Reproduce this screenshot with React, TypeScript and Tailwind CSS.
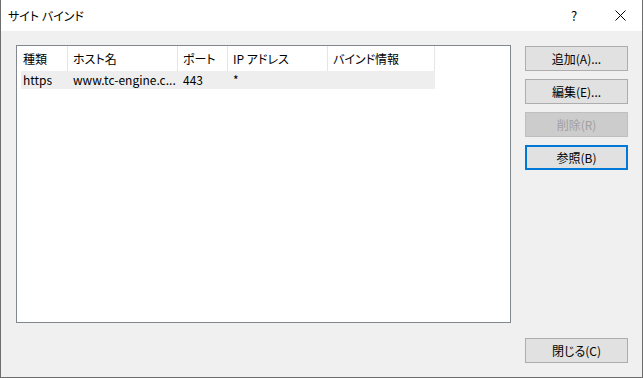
import React from "react";

const font = {
  fontFamily: '"Noto Sans CJK JP", sans-serif',
};

function Btn({ label, kind = "normal" }: { label: string; kind?: "normal" | "disabled" | "focus" }) {
  const cls =
    kind === "disabled"
      ? "bg-[#cccccc] border border-[#bfbfbf] text-[#a0a0a0]"
      : kind === "focus"
      ? "bg-[#e1e1e1] border-2 border-[#0078d7] text-black"
      : "bg-[#e1e1e1] border border-[#adadad] text-black";
  return (
    <div className={`h-[25px] w-[103px] flex items-center justify-center text-[12px] leading-none ${cls}`}>
      {label}
    </div>
  );
}

export default function App() {
  return (
    <div
      className="w-[644px] h-[378px] bg-white [font-feature-settings:'palt'] text-black"
      style={font}
    >
      <div className="w-[643px] h-[378px] flex flex-col border-l border-r border-b border-[#6d6d6d]">
        {/* title bar */}
        <div className="h-[31px] bg-white flex items-center shrink-0">
          <div className="pl-[7px] text-[12px] leading-none flex-1">サイト バインド</div>
          <div className="text-[13px] leading-none w-[10px] mr-[34px]">?</div>
          <svg width="11" height="11" viewBox="0 0 11 11" className="mr-[16px]">
            <path d="M0.5 0.5 L10.5 10.5 M10.5 0.5 L0.5 10.5" stroke="#000" strokeWidth="1" fill="none" />
          </svg>
        </div>
        {/* body */}
        <div className="flex-1 bg-[#f0f0f0] flex flex-col pl-[15px] pr-[14px] pt-[14px] pb-[14px]">
          <div className="flex gap-[14px]">
            {/* list view */}
            <div className="w-[495px] h-[278px] bg-white border border-[#828790] text-[12px] leading-none">
              <div className="flex h-[25px]">
                <div className="w-[51px] border-r border-[#e5e5e5] pl-[6px] flex items-center">種類</div>
                <div className="w-[110px] border-r border-[#e5e5e5] pl-[5px] flex items-center">ホスト名</div>
                <div className="w-[50px] border-r border-[#e5e5e5] pl-[5px] flex items-center">ポート</div>
                <div className="w-[100px] border-r border-[#e5e5e5] pl-[5px] flex items-center">IP アドレス</div>
                <div className="w-[107px] border-r border-[#e5e5e5] pl-[5px] flex items-center">バインド情報</div>
              </div>
              <div className="flex h-[18px] ml-[4px] w-[414px] bg-[#eeeeee]">
                <div className="w-[47px] pl-[2px] flex items-center">https</div>
                <div className="w-[110px] pl-[5px] flex items-center whitespace-nowrap">www.tc-engine.c...</div>
                <div className="w-[50px] pl-[5px] flex items-center">443</div>
                <div className="w-[100px] pl-[5px] flex items-center">*</div>
              </div>
            </div>
            {/* buttons */}
            <div className="flex flex-col gap-[8px] mt-[1px]">
              <Btn label="追加(A)..." />
              <Btn label="編集(E)..." />
              <Btn label="削除(R)" kind="disabled" />
              <Btn label="参照(B)" kind="focus" />
            </div>
          </div>
          <div className="mt-auto flex justify-end">
            <Btn label="閉じる(C)" />
          </div>
        </div>
      </div>
    </div>
  );
}
